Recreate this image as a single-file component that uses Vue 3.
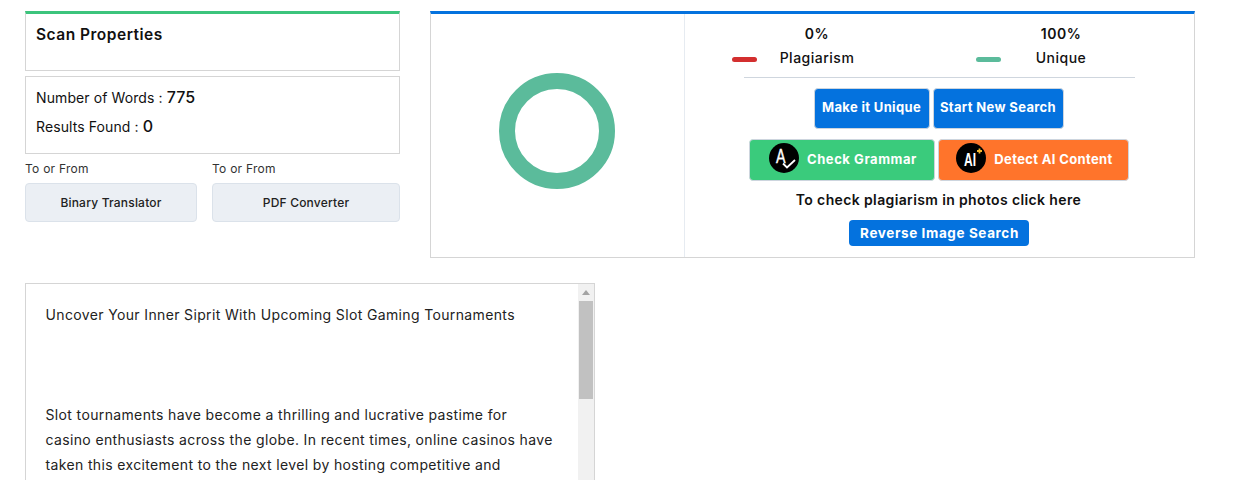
<script setup>
const title = 'Uncover Your Inner Siprit With Upcoming Slot Gaming Tournaments'
const lines = [
  'Slot tournaments have become a thrilling and lucrative pastime for',
  'casino enthusiasts across the globe. In recent times, online casinos have',
  'taken this excitement to the next level by hosting competitive and'
]
const legend = [
  { value: '0%', label: 'Plagiarism', color: '#d32f2f' },
  { value: '100%', label: 'Unique', color: '#5bbb9b' }
]
</script>

<template>
  <div class="page">
    <div class="top">
      <div class="left">
        <div class="card card-head">
          <h3>Scan Properties</h3>
        </div>
        <div class="card card-stats">
          <p>Number of Words : <b>775</b></p>
          <p>Results Found : <b>0</b></p>
        </div>
        <div class="links">
          <div class="link link-a">
            <span>To or From</span>
            <a class="link-btn">Binary Translator</a>
          </div>
          <div class="link link-b">
            <span>To or From</span>
            <a class="link-btn">PDF Converter</a>
          </div>
        </div>
      </div>

      <div class="result">
        <div class="chart">
          <svg width="116" height="116" viewBox="0 0 116 116">
            <circle cx="58" cy="58" r="50" fill="none" stroke="#5bbb9b" stroke-width="16" />
          </svg>
        </div>
        <div class="info">
          <div class="legend">
            <div v-for="item in legend" :key="item.label" class="legend-item">
              <div class="legend-value">{{ item.value }}</div>
              <div class="legend-row">
                <i class="dash" :style="{ background: item.color }"></i>
                <span class="legend-label">{{ item.label }}</span>
              </div>
            </div>
          </div>
          <div class="rule"></div>
          <div class="btn-row row-one">
            <button class="btn blue unique">Make it Unique</button>
            <button class="btn blue search">Start New Search</button>
          </div>
          <div class="btn-row row-two">
            <button class="btn green">
              <svg class="badge" width="30" height="30" viewBox="0 0 30 30">
                <circle cx="15" cy="15" r="15" fill="#000" />
                <text x="7" y="19.500" textLength="9.500" lengthAdjust="spacingAndGlyphs" class="badge-text a">A</text>
                <path d="M14 20.500l4 4L26 17" fill="none" stroke="#fff" stroke-width="1.800" />
              </svg>
              Check Grammar
            </button>
            <button class="btn orange">
              <svg class="badge" width="30" height="30" viewBox="0 0 30 30">
                <circle cx="15" cy="15" r="15" fill="#000" />
                <text x="8" y="23" textLength="12" lengthAdjust="spacingAndGlyphs" class="badge-text ai">AI</text>
                <path d="M23.500 5.500v5M21 8h5" fill="none" stroke="#f5b82e" stroke-width="1.800" />
              </svg>
              Detect AI Content
            </button>
          </div>
          <p class="photo-note">To check plagiarism in photos click here</p>
          <button class="reverse">Reverse Image Search</button>
        </div>
      </div>
    </div>

    <div class="textbox">
      <div class="textbox-body">
        <p class="doc-title">{{ title }}</p>
        <p v-for="line in lines" :key="line" class="doc-line">{{ line }}</p>
      </div>
      <div class="scrollbar">
        <span class="arrow"></span>
        <span class="thumb"></span>
      </div>
    </div>
  </div>
</template>

<style>
html,
body {
  height: 480px;
  overflow: hidden;
  background: #fff;
}
</style>

<style scoped>
.page {
  box-sizing: border-box;
  width: 1255px;
  height: 480px;
  padding: 11px 0 0 25px;
  overflow: hidden;
  font-family: Inter, "Open Sans", sans-serif;
  color: #111;
}

.page * {
  box-sizing: border-box;
}

.top {
  display: flex;
  gap: 30px;
}

.left {
  width: 375px;
}

.card {
  border: 1px solid #d5d5d5;
}

.card-head {
  height: 60px;
  border-top: 3px solid #3cc47c;
  padding: 11px 10px;
}

.card-head h3 {
  margin: 0;
  font-size: 15.500px;
  line-height: 20px;
  font-weight: 600;
  letter-spacing: 0.5px;
}

.card-stats {
  height: 78px;
  margin-top: 5px;
  padding: 10px 10px;
}

.card-stats p {
  margin: 0 0 8px;
  font-size: 14px;
  line-height: 20px;
  letter-spacing: 0.1px;
}

.card-stats b {
  font-size: 16px;
  font-weight: 500;
  letter-spacing: 0;
}

.links {
  display: flex;
  gap: 15px;
  margin-top: 7px;
}

.link-a {
  width: 172px;
}

.link-b {
  width: 188px;
}

.link span {
  display: block;
  font-size: 12px;
  line-height: 16px;
  color: #333;
  letter-spacing: 0.25px;
}

.link-btn {
  display: flex;
  align-items: center;
  justify-content: center;
  height: 39px;
  margin-top: 6px;
  background: #ebeff4;
  border: 1px solid #dbe2ea;
  border-radius: 4px;
  font-size: 12px;
  font-weight: 500;
  color: #222;
  letter-spacing: 0.2px;
}

.result {
  display: flex;
  width: 765px;
  height: 247px;
  border: 1px solid #d5d5d5;
  border-top: 3px solid #0472de;
}

.chart {
  display: flex;
  align-items: center;
  justify-content: center;
  width: 254px;
  border-right: 1px solid #e6ebf1;
  padding: 0 2px 10px 0;
}

.info {
  flex: 1;
  display: flex;
  flex-direction: column;
  align-items: center;
  padding-right: 2px;
}

.legend {
  display: flex;
  gap: 99px;
  align-self: flex-start;
  margin: 10px 0 0 47px;
}

.legend-item {
  width: 145px;
  font-size: 14px;
  font-weight: 500;
  line-height: 20px;
  letter-spacing: 0.5px;
}

.legend-value {
  padding-left: 25px;
  text-align: center;
  font-weight: 600;
}

.legend-row {
  display: flex;
  align-items: center;
  margin-top: 4px;
}

.dash {
  width: 25px;
  height: 5px;
  margin-top: 3px;
  border-radius: 3px;
}

.legend-label {
  flex: 1;
  text-align: center;
}

.rule {
  width: 391px;
  height: 1px;
  margin: 9px 0 0 2px;
  background: #cfd6de;
}

.btn-row {
  display: flex;
  gap: 3px;
}

.row-one {
  margin-top: 10px;
}

.row-two {
  margin-top: 10px;
}

.btn {
  display: flex;
  align-items: center;
  justify-content: center;
  padding: 0 0 2px;
  border: 1px solid #cdd5de;
  border-radius: 4px;
  color: #fff;
  font-family: inherit;
  font-size: 13px;
  font-weight: 700;
  letter-spacing: 0.35px;
}

.blue {
  height: 41px;
  padding-bottom: 4px;
  background: #0472de;
}

.unique {
  width: 116px;
}

.search {
  width: 131px;
}

.green,
.orange {
  height: 42px;
  gap: 8px;
  padding-left: 3px;
}

.green {
  width: 186px;
  background: #3acb7c;
  letter-spacing: 0.55px;
}

.orange {
  width: 191px;
  background: #ff742b;
}

.badge {
  margin-bottom: 2px;
}

.badge-text {
  fill: #fff;
  font-family: "Liberation Sans", sans-serif;
  font-size: 20px;
  font-weight: 400;
  letter-spacing: 0;
}

.badge-text.a {
  stroke: #fff;
  stroke-width: 0.4;
}

.badge-text.ai {
  font-size: 18px;
  font-weight: 700;
}

.photo-note {
  margin: 10px 0 0;
  font-size: 14px;
  line-height: 18px;
  font-weight: 600;
  letter-spacing: 0.37px;
}

.reverse {
  width: 180px;
  height: 26px;
  margin-top: 11px;
  padding: 0 0 0 2px;
  background: #0472de;
  border: none;
  border-radius: 4px;
  color: #fff;
  font-family: inherit;
  font-size: 13.500px;
  font-weight: 700;
  letter-spacing: 0.6px;
}

.textbox {
  display: flex;
  width: 570px;
  height: 400px;
  margin-top: 25px;
  border: 1px solid #d5d5d5;
}

.textbox-body {
  flex: 1;
  padding: 18px 20px 18px 19.500px;
  font-size: 14px;
  line-height: 25px;
  color: #222;
  letter-spacing: 0.36px;
}

.textbox-body p {
  margin: 0;
  white-space: nowrap;
}

.doc-title {
  margin-bottom: 75px !important;
}

.scrollbar {
  display: flex;
  flex-direction: column;
  align-items: center;
  width: 16px;
  background: #f1f1f1;
}

.arrow {
  width: 0;
  height: 0;
  margin-top: 6px;
  border-left: 4px solid transparent;
  border-right: 4px solid transparent;
  border-bottom: 5px solid #a3a3a3;
}

.thumb {
  width: 14px;
  height: 98px;
  margin-top: 6px;
  background: #c1c1c1;
}
</style>
